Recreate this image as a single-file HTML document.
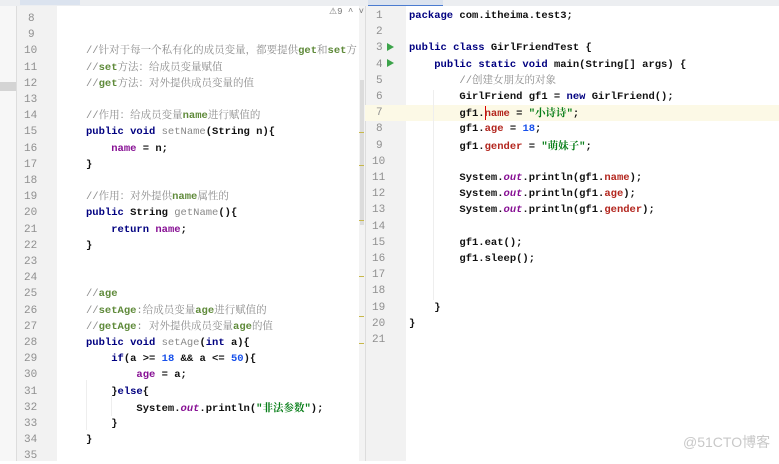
<!DOCTYPE html>
<html><head><meta charset="utf-8"><style>
body{margin:0;width:779px;height:461px;overflow:hidden;background:#fff;position:relative;font-family:"Liberation Mono","Noto Sans CJK SC",monospace;}
.l{position:absolute;white-space:pre;font-size:10.5px;line-height:16px;color:#111;font-weight:bold;}
.n{position:absolute;font-size:11px;line-height:16px;color:#8f8f8f;font-family:"Liberation Mono",monospace;}
.k{color:#000080;font-weight:bold}
.c{color:#8c8c8c;font-weight:normal;font-family:"Liberation Mono","Noto Serif CJK SC",serif}
.cg{color:#5f8a3a;font-weight:bold}
.f{color:#871094}
.r{color:#b3261e}
.s{color:#067d17;font-weight:bold}
.s2{font-family:"Noto Serif CJK SC",serif}
.num{color:#1750eb}
.m{color:#888;font-weight:normal}
.i{font-style:italic;color:#871094}
</style></head><body>
<div style="position:absolute;left:0;top:0;width:365px;height:6px;background:#eceef1"></div>
<div style="position:absolute;left:20px;top:0;width:60px;height:5px;background:#dbe3ef"></div>
<div style="position:absolute;left:365px;top:0;width:414px;height:6px;background:#eceef1"></div>
<div style="position:absolute;left:368px;top:0;width:75px;height:5px;background:#dbe3ef;border-bottom:1px solid #4a7bd0"></div>
<div style="position:absolute;left:0;top:6px;width:16px;height:455px;background:#f7f7f7;border-right:1px solid #ddd"></div>
<div style="position:absolute;left:0;top:82px;width:16px;height:9px;background:#d4d4d4"></div>
<div style="position:absolute;left:17px;top:6px;width:40px;height:455px;background:#f2f2f2"></div>
<div style="position:absolute;left:359px;top:6px;width:6px;height:455px;background:#f3f3f3"></div>
<div style="position:absolute;left:360px;top:80px;width:4px;height:145px;background:#dcdcdc"></div>
<div style="position:absolute;left:365px;top:6px;width:40px;height:455px;background:#f2f2f2;border-left:1px solid #ddd"></div>
<div style="position:absolute;left:365px;top:105px;width:414px;height:16px;background:#fcf9e6"></div>
<div style="position:absolute;left:485px;top:106px;width:1px;height:14px;background:#d00"></div>
<div class="n" style="left:329px;top:4px;font-size:9px;color:#777">⚠9 ^ ˅</div>
<div style="position:absolute;left:359px;top:132px;width:5px;height:1px;background:#c8b84a"></div>
<div style="position:absolute;left:359px;top:165px;width:5px;height:1px;background:#c8b84a"></div>
<div style="position:absolute;left:359px;top:220px;width:5px;height:1px;background:#c8b84a"></div>
<div style="position:absolute;left:359px;top:276px;width:5px;height:1px;background:#c8b84a"></div>
<div style="position:absolute;left:359px;top:316px;width:5px;height:1px;background:#c8b84a"></div>
<div style="position:absolute;left:359px;top:343px;width:5px;height:1px;background:#c8b84a"></div>
<div style="position:absolute;left:387px;top:43px;width:0;height:0;border-left:7px solid #3ca34a;border-top:4px solid transparent;border-bottom:4px solid transparent"></div>
<div style="position:absolute;left:387px;top:59px;width:0;height:0;border-left:7px solid #3ca34a;border-top:4px solid transparent;border-bottom:4px solid transparent"></div>
<div style="position:absolute;left:86px;top:380px;width:1px;height:50px;background:#eee"></div>
<div style="position:absolute;left:111px;top:396px;width:1px;height:20px;background:#eee"></div>
<div style="position:absolute;left:433px;top:90px;width:1px;height:210px;background:#eee"></div>
<div id="L"></div><div id="R"></div>
<div style="position:absolute;left:683px;top:432px;font-family:'Liberation Sans','Noto Sans CJK SC',sans-serif;font-size:14px;color:#c8c8c8">@51CTO博客</div>
<script>
var C='<span class="c">//</span>';
var L={
10:C+'<span class="c">针对于每一个私有化的成员变量，都要提供</span><span class="cg">get</span><span class="c">和</span><span class="cg">set</span><span class="c">方</span>',
11:C+'<span class="cg">set</span><span class="c">方法：给成员变量赋值</span>',
12:C+'<span class="cg">get</span><span class="c">方法：对外提供成员变量的值</span>',
14:C+'<span class="c">作用：给成员变量</span><span class="cg">name</span><span class="c">进行赋值的</span>',
15:'<span class="k">public void</span> <span class="m">setName</span>(String n){',
16:'    <span class="f">name</span> = n;',
17:'}',
19:C+'<span class="c">作用：对外提供</span><span class="cg">name</span><span class="c">属性的</span>',
20:'<span class="k">public</span> String <span class="m">getName</span>(){',
21:'    <span class="k">return</span> <span class="f">name</span>;',
22:'}',
25:C+'<span class="cg">age</span>',
26:C+'<span class="cg">setAge</span><span class="c">:给成员变量</span><span class="cg">age</span><span class="c">进行赋值的</span>',
27:C+'<span class="cg">getAge</span><span class="c">: 对外提供成员变量</span><span class="cg">age</span><span class="c">的值</span>',
28:'<span class="k">public void</span> <span class="m">setAge</span>(<span class="k">int</span> a){',
29:'    <span class="k">if</span>(a &gt;= <span class="num">18</span> &amp;&amp; a &lt;= <span class="num">50</span>){',
30:'        <span class="f">age</span> = a;',
31:'    }<span class="k">else</span>{',
32:'        System.<span class="i">out</span>.println(<span class="s">"<span class="s2">非法参数</span>"</span>);',
33:'    }',
34:'}'};
var R={
1:'<span class="k">package</span> com.itheima.test3;',
3:'<span class="k">public class</span> GirlFriendTest {',
4:'    <span class="k">public static void</span> main(String[] args) {',
5:'        '+C+'<span class="c">创建女朋友的对象</span>',
6:'        GirlFriend gf1 = <span class="k">new</span> GirlFriend();',
7:'        gf1.<span class="r">name</span> = <span class="s">"<span class="s2">小诗诗</span>"</span>;',
8:'        gf1.<span class="r">age</span> = <span class="num">18</span>;',
9:'        gf1.<span class="r">gender</span> = <span class="s">"<span class="s2">萌妹子</span>"</span>;',
11:'        System.<span class="i">out</span>.println(gf1.<span class="r">name</span>);',
12:'        System.<span class="i">out</span>.println(gf1.<span class="r">age</span>);',
13:'        System.<span class="i">out</span>.println(gf1.<span class="r">gender</span>);',
15:'        gf1.eat();',
16:'        gf1.sleep();',
19:'    }',
20:'}'};
var h='';
for(var n=8;n<=35;n++){var y=11+(n-8)*16.2;h+='<div class="n" style="left:'+(n<10?28:24)+'px;top:'+y+'px">'+n+'</div>';if(L[n])h+='<div class="l" style="left:86px;top:'+y+'px">'+L[n]+'</div>';}
for(var n=1;n<=21;n++){var y=8+(n-1)*16.2;h+='<div class="n" style="left:'+(n<10?376:372)+'px;top:'+y+'px">'+n+'</div>';if(R[n])h+='<div class="l" style="left:409px;top:'+y+'px">'+R[n]+'</div>';}
document.getElementById('L').outerHTML=h;
</script>
</body></html>
